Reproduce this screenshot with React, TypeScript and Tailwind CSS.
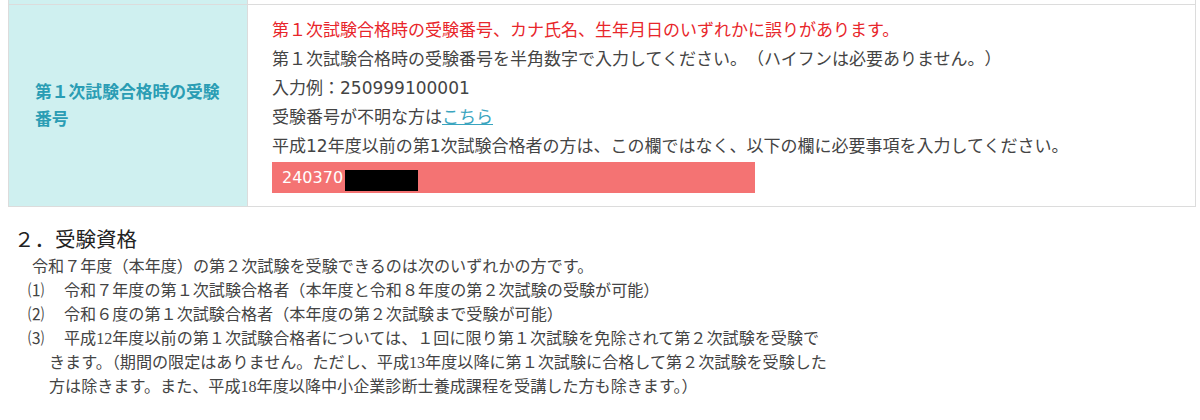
const sans = "font-['DejaVu_Sans','Noto_Sans_CJK_JP',sans-serif]";
const serif = "font-['Liberation_Serif','Noto_Sans_CJK_JP',serif]";

export default function App() {
  return (
    <div className="h-[420px] w-[1200px] overflow-hidden bg-white">
      <div className={`ml-[8px] w-[1188px] [text-spacing-trim:space-all] ${sans}`}>
        <div className="grid h-[4px] grid-cols-[239px_1fr] border-x border-[#dcdcdc]">
          <div className="border-r border-[#dcdcdc] bg-[#cff0f0]" />
          <div />
        </div>
        <div className="grid grid-cols-[239px_1fr] border border-[#dcdcdc]">
          <div className="flex items-center border-r border-[#dcdcdc] bg-[#cff0f0] pl-[26px] pr-4">
            <p className="text-[16.8px] font-bold leading-[27px] text-[#2a9db4]">
              第１次試験合格時の受験
              <br />
              番号
            </p>
          </div>
          <div className="pb-[13px] pl-[24px] pt-[11px] text-[17px] leading-[29px] text-[#444]">
            <p className="text-[#e8262b]">第１次試験合格時の受験番号、カナ氏名、生年月日のいずれかに誤りがあります。</p>
            <p>第１次試験合格時の受験番号を半角数字で入力してください。（ハイフンは必要ありません。）</p>
            <p>入力例：250999100001</p>
            <p>
              受験番号が不明な方は
              <a href="#" className="text-[#3aa5bf] underline">
                こちら
              </a>
            </p>
            <p>平成12年度以前の第1次試験合格者の方は、この欄ではなく、以下の欄に必要事項を入力してください。</p>
            <div className="mt-px flex h-[31px] w-[483px] items-center bg-[#f47373] pl-[10px] text-[16px] text-white">
              <span>240370</span>
              <span className="ml-[2px] mt-[6px] h-[21px] w-[73px] bg-black" />
            </div>
          </div>
        </div>
      </div>

      <div className="pl-[14px] pt-[18px]">
        <h2 className={`text-[20.5px] leading-[30px] text-[#222] ${sans}`}>２．受験資格</h2>
        <div className={`text-[16.1px] leading-[24px] text-[#444] ${serif}`}>
          <p className="pl-[18px]">令和７年度（本年度）の第２次試験を受験できるのは次のいずれかの方です。</p>
          <p className="pl-[14px]">
            <span className="inline-block w-[36px]">⑴</span>令和７年度の第１次試験合格者（本年度と令和８年度の第２次試験の受験が可能）
          </p>
          <p className="pl-[14px]">
            <span className="inline-block w-[36px]">⑵</span>令和６度の第１次試験合格者（本年度の第２次試験まで受験が可能）
          </p>
          <div className="pl-[35px] -indent-[21px] whitespace-nowrap">
            <span className="inline-block w-[36px] indent-0">⑶</span>
            平成12年度以前の第１次試験合格者については、１回に限り第１次試験を免除されて第２次試験を受験で
            <br />
            きます。（期間の限定はありません。ただし、平成13年度以降に第１次試験に合格して第２次試験を受験した
            <br />
            方は除きます。また、平成18年度以降中小企業診断士養成課程を受講した方も除きます。）
          </div>
        </div>
      </div>
    </div>
  );
}
